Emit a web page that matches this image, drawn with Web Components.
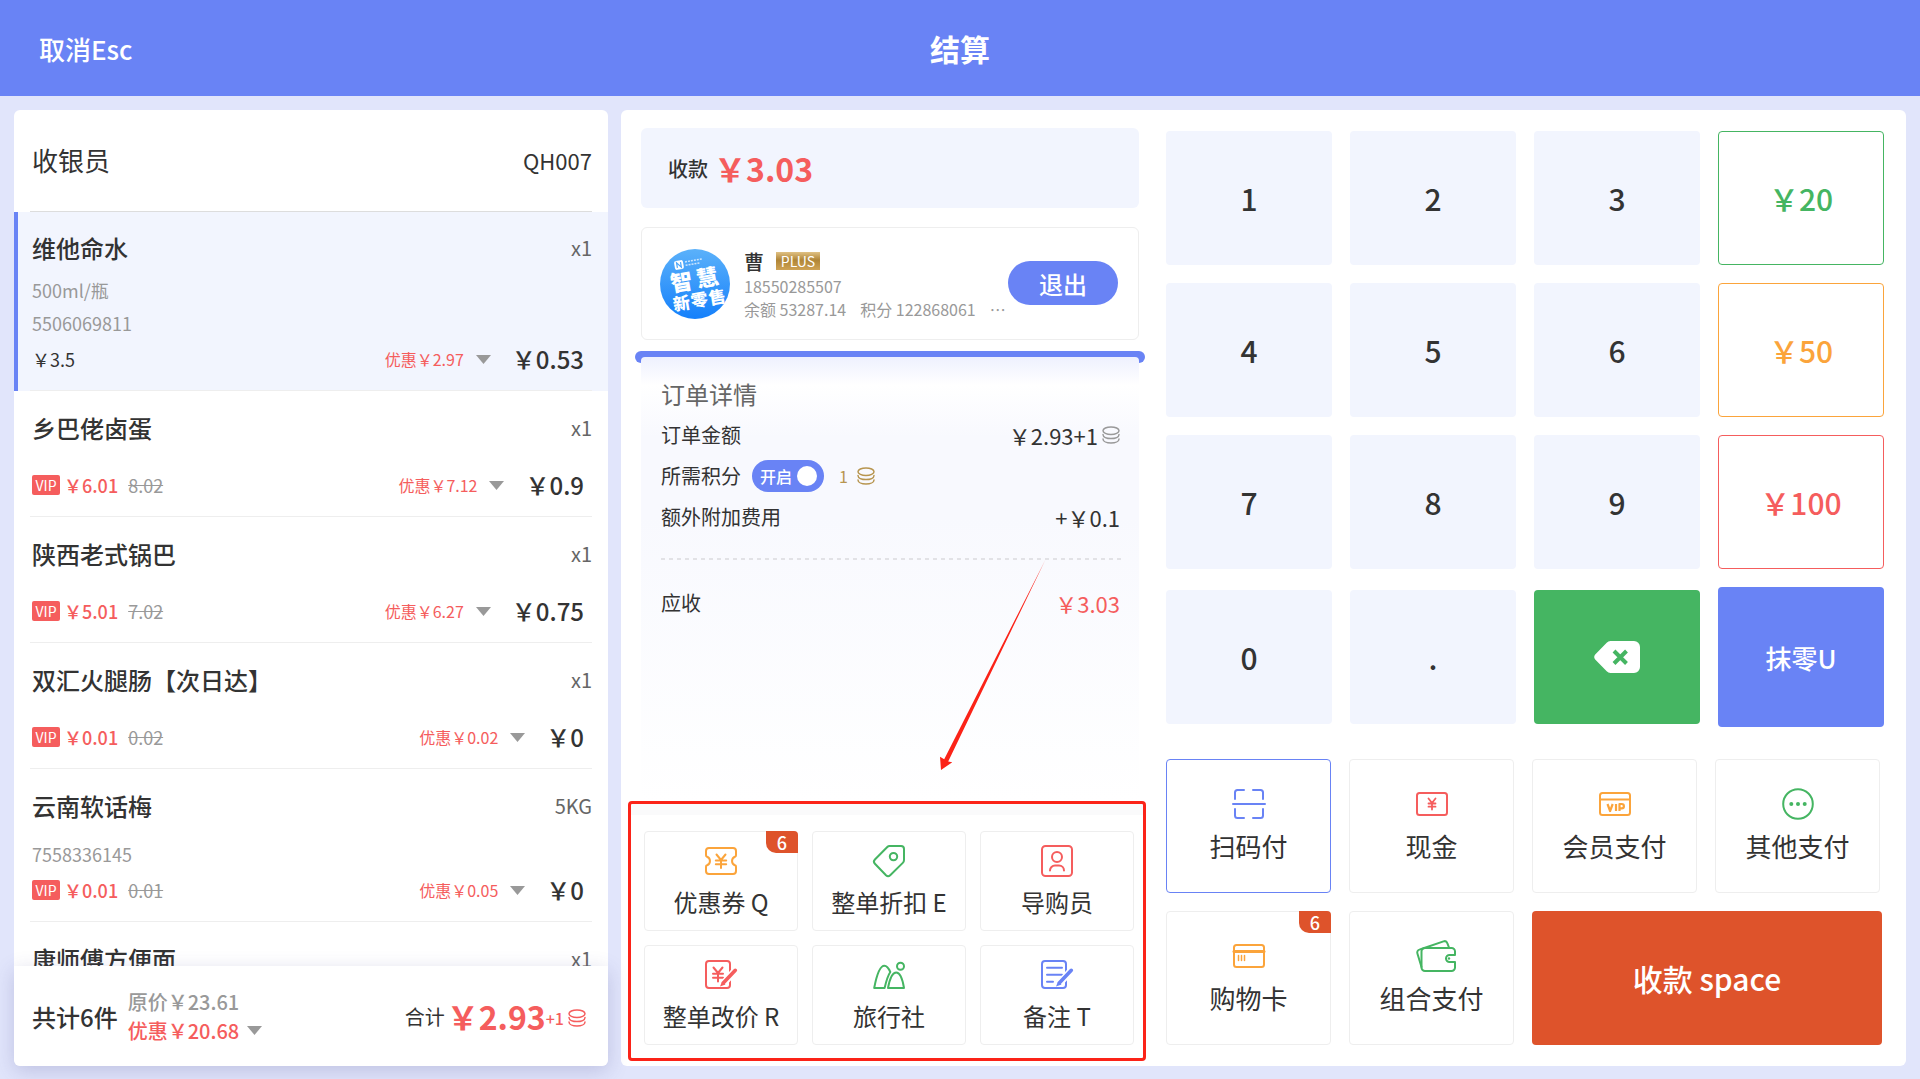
<!DOCTYPE html>
<html lang="zh-CN">
<head>
<meta charset="utf-8">
<title>结算</title>
<style>
  :root {
    --primary: #6983f5;
    --red: #f55d5d;
    --green: #45b562;
    --orange: #fba43b;
    --accent: #de532b;
    --tint: #f2f5fe;
    --ink: #333;
    --muted: #999;
    --line: #eee;
  }
  body {
    margin: 0;
    font-family: "Noto Sans CJK SC", "Noto Sans", sans-serif;
    color: var(--ink);
    background: #e1e5fb;
  }
</style>
</head>
<body>
<checkout-app></checkout-app>

<script>
const BASE = `
  *, *::before, *::after { box-sizing: border-box; }
  button { font: inherit; color: inherit; border: 0; background: none; padding: 0; margin: 0; cursor: pointer; }
  h1, h2 { margin: 0; padding: 0; }
`;

function define(name, css, html) {
  customElements.define(name, class extends HTMLElement {
    constructor() {
      super();
      this.attachShadow({ mode: 'open' });
    }
    connectedCallback() {
      const body = typeof html === 'function' ? html(this) : html;
      this.shadowRoot.innerHTML = `<style>${BASE}${css}</style>${body}`;
    }
  });
}

/* name: [width, height, markup] */
const ICONS = {
  coins: [18, 18, `<g stroke-width="1.5"><ellipse cx="9" cy="4.700" rx="8" ry="3.800"/><path d="M1 8.600c0 2.400 3.600 4 8 4s8-1.600 8-4M1 13c0 2.400 3.600 4 8 4s8-1.600 8-4"/></g>`],
  caret: [15, 9, `<path d="M0 0h15L7.5 9z" fill="currentColor" stroke="none"/>`],
  coupon: [32, 32, `<path d="M4 3h24a3 3 0 0 1 3 3v4.300c0 .7-.4 1.200-1 1.400a4.600 4.600 0 0 0 0 8.600c.6.2 1 .7 1 1.400V26a3 3 0 0 1-3 3H4a3 3 0 0 1-3-3v-4.300c0-.7.4-1.200 1-1.400a4.600 4.600 0 0 0 0-8.600c-.6-.2-1-.7-1-1.400V6a3 3 0 0 1 3-3z"/><path d="M11.500 9.500 16 15l4.500-5.500M16 15v8M10.800 15.500h10.400M10.800 19.300h10.400"/>`],
  tag: [32, 32, `<path d="M16.600 1H28a3 3 0 0 1 3 3v11a4 4 0 0 1-1.200 2.900L17.200 30.200a3 3 0 0 1-4.200 0L1.900 18.700a3 3 0 0 1 0-4.200L14.300 2a3.500 3.500 0 0 1 2.300-1z"/><circle cx="20.500" cy="11.600" r="3.700"/>`],
  person: [32, 32, `<rect x="1" y="1" width="30" height="30" rx="3.500"/><circle cx="16" cy="12" r="5"/><path d="M9 25.500a5 5 0 0 1 5-5h4a5 5 0 0 1 5 5"/>`],
  reprice: [32, 32, `<rect x="1" y="2" width="24" height="27" rx="3"/><path d="M8.500 8.500 13 14l4.500-5.500M13 14v8.500M8 14.800h10M8 18.800h10"/><path d="M30 11.500 19 24" stroke="#fff" stroke-width="7"/><path d="M30.300 11.300 18.500 23.800" stroke-width="3.600"/><path d="M15 27.500l2-5 3.500 3z" fill="currentColor" stroke="none"/>`],
  hills: [32, 32, `<path d="M1.200 29C3.500 17 7 6.800 11.400 6.800c2.600 0 4.400 2.800 5.900 6.200C14.600 17 13 23 11.600 29z"/><path d="M15 29c1.600-8.500 4.500-15.500 8.200-15.500S29.600 20.500 31 29z"/><circle cx="27.500" cy="7.200" r="3.500"/>`],
  note: [32, 32, `<rect x="1" y="2" width="24" height="27" rx="3"/><path d="M6 8.700h15M6 15.700h15M6 22.700h6"/><path d="M30 11.500 19 24" stroke="#fff" stroke-width="7"/><path d="M30.300 11.300 18.500 23.800" stroke-width="3.600"/><path d="M15 27.500l2-5 3.500 3z" fill="currentColor" stroke="none"/>`],
  scan: [32, 32, `<path d="M2 11V4.500A2.500 2.500 0 0 1 4.500 2H11M20 2h7.500A2.500 2.500 0 0 1 30 4.500V11M30 21v6.500a2.500 2.500 0 0 1-2.500 2.500H20M11 30H4.500A2.500 2.500 0 0 1 2 27.500V21M0 16h32"/>`],
  cash: [32, 32, `<rect x="1" y="5" width="30" height="22" rx="2.500"/><path d="M12.500 10.500 16 15l3.500-4.500M16 15v6.500M12.500 15.500h7M12.500 18.700h7" stroke-width="1.800"/>`],
  vip: [32, 32, `<rect x="1" y="5" width="30" height="22" rx="2.500"/><path d="M1 11.500h30"/><path d="M8.500 16l2.600 7 2.600-7M17 16v7M20.500 23v-7h2.200a2.100 2.100 0 0 1 0 4.400h-2.200" stroke-width="2.200" stroke-linecap="butt"/>`],
  more: [32, 32, `<circle cx="16" cy="16" r="14.800"/><g fill="currentColor" stroke="none"><circle cx="9.300" cy="16" r="2"/><circle cx="16" cy="16" r="2"/><circle cx="22.700" cy="16" r="2"/></g>`],
  card: [32, 32, `<rect x="1" y="5" width="30" height="22" rx="2.500"/><path d="M1 11.500h30" stroke-width="3"/><path d="M5.500 15.500v5M8.500 15.500v5M11.500 15.500v5" stroke-width="1.500"/>`],
  wallet: [40, 32, `<path d="M9 8h26.500A3.500 3.500 0 0 1 39 11.500V15h-5.500a3.500 3.500 0 0 0 0 7H39v5.500a3.500 3.500 0 0 1-3.500 3.500H9a3.500 3.500 0 0 1-3.500-3.500v-16A3.500 3.500 0 0 1 9 8z"/><path d="M7.500 8.200 27.500 1.400a3 3 0 0 1 3.800 1.800L33 7.500M5.500 27 1.400 13.500a3 3 0 0 1 2-3.900l4-1.400"/><circle cx="33" cy="18.500" r="1.200" fill="currentColor" stroke="none"/>`],
  erase: [46, 32, `<path d="M16.500 0H40a6 6 0 0 1 6 6v20a6 6 0 0 1-6 6H16.500a5 5 0 0 1-3.800-1.800L1.200 18.500a4 4 0 0 1 0-5L12.700 1.800A5 5 0 0 1 16.500 0z" fill="#fff" stroke="none"/><path d="M20 10l12.500 12.500M32.500 10 20 22.500" stroke="var(--green)" stroke-width="4" stroke-linecap="butt"/>`],
};

define('pos-icon',
  `:host { display: block; flex: none; } :host([name=wallet]) { width: 32px; } svg { display: block; overflow: visible; }`,
  el => {
    const [w, h, body] = ICONS[el.getAttribute('name')];
    return `<svg width="${w}" height="${h}" viewBox="0 0 ${w} ${h}" fill="none" stroke="currentColor" stroke-width="2" stroke-linecap="round" stroke-linejoin="round" aria-hidden="true">${body}</svg>`;
  });

define('top-bar', `
  :host { display: grid; grid-template-columns: 1fr auto 1fr; align-items: center; flex: none; height: 96px; padding: 0 39px; background: var(--primary); color: #fff; }
  button { justify-self: start; font-size: 26px; font-weight: 500; }
  h1 { font-size: 30px; font-weight: 700; }`,
  `<button type="button">取消Esc</button><h1>结算</h1>`);

define('cart-item', `
  :host { display: flex; flex-direction: column; flex: none; padding: 19px 16px 0 18px; }
  :host([selected]) { padding-top: 18px; background: var(--tint); box-shadow: inset 4px 0 var(--primary); }
  .head { display: flex; justify-content: space-between; line-height: 36px; }
  .name { font-size: 24px; font-weight: 500; }
  .qty { font-size: 20px; color: #666; }
  .meta { margin-top: 14px; font-size: 18px; line-height: 33px; color: var(--muted); }
  :host([selected]) .meta { margin-top: 8px; }
  .row { display: flex; align-items: center; line-height: 36px; margin-top: 21px; font-size: 18px; padding-right: 8px; }
  .meta + .row { margin-top: 1px; }
  .vip { width: 28px; line-height: 20px; margin-right: 4px; border-radius: 2px; background: var(--red); color: #fff; font-size: 14px; text-align: center; }
  .now { color: var(--red); font-weight: 500; }
  s { margin-left: 10px; color: var(--muted); }
  .off { display: flex; align-items: center; gap: 12px; margin-left: auto; font-size: 16px; line-height: 36px; color: var(--red); }
  .off pos-icon { color: var(--muted); }
  .sum { margin-left: 21px; font-size: 24px; font-weight: 500; }
  .rule { height: 1px; margin: 13px 0 0 -2px; background: var(--line); }`,
  el => {
    const a = n => el.getAttribute(n) || '';
    const meta = a('meta') ? `<div class="meta">${a('meta').split('|').map(t => `<div>${t}</div>`).join('')}</div>` : '';
    const price = a('was')
      ? `<span class="vip">VIP</span><span class="now">${a('price')}</span><s>${a('was')}</s>`
      : `<span>${a('price')}</span>`;
    return `
      <div class="head"><span class="name"><slot></slot></span><span class="qty">${a('qty')}</span></div>
      ${meta}
      ${a('sum') ? `<div class="row">${price}<button class="off" type="button">优惠${a('off')}<pos-icon name="caret"></pos-icon></button><span class="sum">${a('sum')}</span></div><div class="rule"></div>` : ''}`;
  });

define('cart-panel', `
  :host { display: flex; flex-direction: column; min-height: 0; border-radius: 6px; background: #fff; }
  .cashier { display: flex; align-items: center; justify-content: space-between; flex: none; height: 102px; margin: 0 16px; padding: 0 0 2px 2px; border-bottom: 1px solid #ddd; font-size: 26px; }
  .cashier span + span { font-size: 22px; }
  .list { flex: 1; min-height: 0; overflow: hidden; display: flex; flex-direction: column; }
  .total { position: relative; display: flex; align-items: center; flex: none; height: 100px; padding: 0 22px 0 18px; border-radius: 0 0 6px 6px; background: #fff; box-shadow: 0 5px 20px rgba(70, 70, 140, .22); }
  .count { font-size: 24px; font-weight: 500; }
  .prices { margin-left: 10px; font-size: 20px; font-weight: 500; line-height: 29px; color: var(--muted); }
  .saved { display: flex; align-items: center; gap: 8px; color: var(--red); line-height: 29px; }
  .saved pos-icon { color: var(--muted); }
  .due { display: flex; align-items: center; margin-left: auto; font-size: 20px; color: var(--red); }
  .due span { color: var(--ink); margin-right: 2px; }
  .due strong { font-size: 32px; font-weight: 700; }
  .due em { font-style: normal; font-size: 16px; font-weight: 500; padding-top: 4px; }
  .due pos-icon { margin-left: 4px; padding-top: 4px; }`, `
  <div class="cashier"><span>收银员</span><span>QH007</span></div>
  <div class="list">
    <cart-item selected qty="x1" meta="500ml/瓶|5506069811" price="￥3.5" off="￥2.97" sum="￥0.53">维他命水</cart-item>
    <cart-item qty="x1" price="￥6.01" was="8.02" off="￥7.12" sum="￥0.9">乡巴佬卤蛋</cart-item>
    <cart-item qty="x1" price="￥5.01" was="7.02" off="￥6.27" sum="￥0.75">陕西老式锅巴</cart-item>
    <cart-item qty="x1" price="￥0.01" was="0.02" off="￥0.02" sum="￥0">双汇火腿肠【次日达】</cart-item>
    <cart-item qty="5KG" meta="7558336145" price="￥0.01" was="0.01" off="￥0.05" sum="￥0">云南软话梅</cart-item>
    <cart-item qty="x1">康师傅方便面</cart-item>
  </div>
  <div class="total">
    <span class="count">共计6件</span>
    <div class="prices"><div>原价￥23.61</div><button class="saved" type="button">优惠￥20.68<pos-icon name="caret"></pos-icon></button></div>
    <div class="due"><span>合计</span><strong>￥2.93</strong><em>+1</em><pos-icon name="coins"></pos-icon></div>
  </div>`);

define('member-card', `
  :host { display: flex; align-items: center; height: 113px; padding: 0 20px 0 18px; border: 1px solid var(--line); border-radius: 6px; }
  .avatar { flex: none; display: block; }
  .info { margin-left: 14px; padding-top: 2px; font-size: 16px; line-height: 23px; color: var(--muted); white-space: nowrap; }
  .who { display: flex; align-items: center; gap: 12px; line-height: 26px; font-size: 20px; font-weight: 500; color: var(--ink); }
  .plus { width: 44px; line-height: 18px; margin-bottom: 2px; text-align: center; font-size: 14px; font-weight: 400; color: #fff; background: linear-gradient(#e0c184, #b08536 45%, #cfa355); }
  .sums { display: flex; gap: 14px; }
  .quit { flex: none; margin: 0 0 1px auto; width: 110px; height: 44px; border-radius: 22px; background: var(--primary); color: #fff; font-size: 24px; font-weight: 500; }`, `
  <svg class="avatar" width="70" height="70" viewBox="0 0 70 70" role="img" aria-label="智慧新零售">
    <defs><linearGradient id="g" x1="0" y1="0" x2="0" y2="1"><stop offset="0" stop-color="#5bb1fa"/><stop offset="1" stop-color="#1580fb"/></linearGradient></defs>
    <circle cx="35" cy="35" r="35" fill="url(#g)"/>
    <g transform="rotate(-10 35 35)" fill="#fff" font-family="Noto Sans CJK SC, sans-serif" font-weight="900">
      <rect x="18" y="9" width="9" height="9" rx="2"/><path d="M20.500 16v-5l4 5v-5" stroke="#4aa5fa" stroke-width="1.200" fill="none"/>
      <path d="M29 11.500h17M29 15h15" stroke="#fff" stroke-width="1.500" stroke-dasharray="2 1" opacity=".7"/>
      <text x="11" y="39" font-size="22">智</text><text x="37" y="39" font-size="22">慧</text>
      <text x="10" y="58" font-size="17">新</text><text x="28" y="58" font-size="17">零</text><text x="46" y="58" font-size="17">售</text>
    </g>
  </svg>
  <div class="info">
    <div class="who">曹<span class="plus">PLUS</span></div>
    <div>18550285507</div>
    <div class="sums"><span>余额 53287.14</span><span>积分 122868061</span><span>…</span></div>
  </div>
  <button class="quit" type="button">退出</button>`);

define('order-detail', `
  :host { display: flex; flex-direction: column; flex: 1; min-height: 0; }
  .bar { flex: none; height: 12px; margin: 0 -6px -6px; border-radius: 6px; background: var(--primary); }
  .sheet { position: relative; flex: 1; min-height: 0; padding: 19px 18px 0 20px; border-radius: 4px 4px 0 0;
    background: linear-gradient(#eef1fe 0, #fff 28px, #f8f9fe 80px, #f8f9fe 160px, #fff 100%); }
  h2 { font-size: 24px; font-weight: 400; line-height: 36px; color: #666; }
  .row { display: flex; align-items: center; height: 41px; font-size: 20px; }
  .row:first-of-type { margin-top: 2px; }
  .amt { display: flex; align-items: center; gap: 4px; margin: 0 1px 0 auto; font-size: 22px; }
  .amt pos-icon { color: var(--muted); }
  .due { color: var(--red); }
  .switch { position: relative; display: flex; align-items: center; width: 72px; height: 32px; margin-left: 11px; padding-left: 8px; border-radius: 16px; background: var(--primary); color: #fff; font-size: 16px; font-weight: 500; }
  .switch input { position: absolute; inset: 0; margin: 0; opacity: 0; }
  .switch i { width: 20px; height: 20px; margin-left: 5px; border-radius: 50%; background: #fff; }
  .pts { display: flex; align-items: center; gap: 9px; margin-left: 15px; font-size: 16px; color: #b7954f; }
  .dash { height: 2px; margin: 21px 0 22px; background: repeating-linear-gradient(90deg, #e2e2e6 0 4px, transparent 4px 8px); }
  .arrow { position: absolute; right: 88px; top: 200px; width: 112px; height: 216px; }`, `
  <div class="bar"></div>
  <div class="sheet">
    <h2>订单详情</h2>
    <div class="row"><span>订单金额</span><span class="amt">￥2.93+1<pos-icon name="coins"></pos-icon></span></div>
    <div class="row"><span>所需积分</span><label class="switch"><input type="checkbox" role="switch" checked>开启<i></i></label><span class="pts">1<pos-icon name="coins"></pos-icon></span></div>
    <div class="row"><span>额外附加费用</span><span class="amt">+￥0.1</span></div>
    <div class="dash"></div>
    <div class="row"><span>应收</span><span class="amt due">￥3.03</span></div>
    <svg class="arrow" viewBox="0 0 112 216" aria-hidden="true"><path d="M106.300 3 9.200 204.400l4.100.9L2 213 1 199.700l4.200 2.600z" fill="#fb2318"/></svg>
  </div>`);

define('action-tile', `
  :host { display: block; }
  button { position: relative; display: flex; flex-direction: column; align-items: center; width: 100%; height: 100px; padding-top: 13px; border: 1px solid var(--line); border-radius: 4px; background: #fff; font-size: 24px; line-height: 36px; }
  pos-icon { margin-bottom: 7px; color: var(--icon); }
  :host([size=large]) button { height: 134px; padding-top: 28px; font-size: 26px; line-height: 40px; }
  :host([size=large]) pos-icon { margin-bottom: 6px; }
  :host([active]) button { border-color: var(--primary); }
  .badge { position: absolute; top: -1px; right: -1px; width: 32px; line-height: 22px; border-radius: 0 4px 0 10px; background: var(--accent); color: #fff; font-size: 18px; font-weight: 500; text-align: center; }`,
  el => `<button type="button"><pos-icon name="${el.getAttribute('icon')}" style="--icon: var(--${el.getAttribute('tone')})"></pos-icon><span><slot></slot></span>${el.hasAttribute('badge') ? `<span class="badge">${el.getAttribute('badge')}</span>` : ''}</button>`);

/* Red callout frame around the order actions */
define('callout-frame', `
  :host { display: block; flex: none; margin: 0 -7px 0 -13px; padding: 27px 9px 13px 13px; border: 3px solid #fb2318; border-radius: 4px; background: linear-gradient(#fafafb 0 11px, #fff 11px); }
  .grid { display: grid; grid-template-columns: repeat(3, minmax(0, 1fr)); gap: 14px; }`,
  `<div class="grid"><slot></slot></div>`);

define('key-button', `
  :host { display: block; }
  button { display: flex; align-items: center; justify-content: center; width: 100%; height: 134px; border-radius: 4px; background: var(--tint); font-size: 30px; font-weight: 500; }
  :host([outline]) button { border: 1px solid var(--tone); background: #fff; color: var(--tone); }
  :host([solid]) button { background: var(--tone); color: #fff; }
  :host([tall]) button { height: 140px; font-size: 26px; }`,
  el => `<button type="button" style="--tone: var(--${el.getAttribute('tone') || 'tint'})" ${el.getAttribute('label') ? `aria-label="${el.getAttribute('label')}"` : ''}><slot></slot></button>`);

define('pay-pad', `
  :host { display: block; }
  .keys { display: grid; grid-template-columns: repeat(4, minmax(0, 1fr)); gap: 18px; align-items: center; }
  .pays { display: grid; grid-template-columns: repeat(4, minmax(0, 1fr)); gap: 18px; margin: 32px 4px 0 0; }
  .submit { grid-column: span 2; height: 134px; margin-right: -2px; border-radius: 4px; background: var(--accent); color: #fff; font-size: 30px; font-weight: 500; }`, `
  <div class="keys">
    <key-button>1</key-button><key-button>2</key-button><key-button>3</key-button><key-button outline tone="green">￥20</key-button>
    <key-button>4</key-button><key-button>5</key-button><key-button>6</key-button><key-button outline tone="orange">￥50</key-button>
    <key-button>7</key-button><key-button>8</key-button><key-button>9</key-button><key-button outline tone="red">￥100</key-button>
    <key-button>0</key-button><key-button>.</key-button><key-button solid tone="green" label="删除"><pos-icon name="erase"></pos-icon></key-button><key-button solid tall tone="primary">抹零U</key-button>
  </div>
  <div class="pays">
    <action-tile size="large" active icon="scan" tone="primary">扫码付</action-tile>
    <action-tile size="large" icon="cash" tone="red">现金</action-tile>
    <action-tile size="large" icon="vip" tone="orange">会员支付</action-tile>
    <action-tile size="large" icon="more" tone="green">其他支付</action-tile>
    <action-tile size="large" icon="card" tone="orange" badge="6">购物卡</action-tile>
    <action-tile size="large" icon="wallet" tone="green">组合支付</action-tile>
    <button class="submit" type="button">收款 space</button>
  </div>`);

define('checkout-app', `
  :host { display: flex; flex-direction: column; height: 100vh; min-height: 1079px; }
  main { flex: 1; min-height: 0; display: grid; grid-template-columns: minmax(0, 594fr) minmax(0, 1285fr); gap: 13px; padding: 14px 14px 13px; }
  .work { display: grid; grid-template-columns: minmax(0, 498fr) minmax(0, 718fr); gap: 27px; min-height: 0; padding: 0 22px 0 20px; border-radius: 6px; background: #fff; }
  .order { display: flex; flex-direction: column; min-height: 0; padding: 18px 0 5px; }
  .receive { display: flex; align-items: center; gap: 6px; flex: none; height: 80px; padding-left: 27px; border-radius: 6px; background: var(--tint); font-size: 20px; font-weight: 500; }
  .receive strong { font-size: 32px; font-weight: 700; color: var(--red); }
  member-card { flex: none; margin: 19px 0 11px; }
  pay-pad { padding-top: 21px; }`, `
  <top-bar></top-bar>
  <main>
    <cart-panel></cart-panel>
    <section class="work">
      <div class="order">
        <div class="receive">收款<strong>￥3.03</strong></div>
        <member-card></member-card>
        <order-detail></order-detail>
        <callout-frame>
          <action-tile icon="coupon" tone="orange" badge="6">优惠券 Q</action-tile>
          <action-tile icon="tag" tone="green">整单折扣 E</action-tile>
          <action-tile icon="person" tone="red">导购员</action-tile>
          <action-tile icon="reprice" tone="red">整单改价 R</action-tile>
          <action-tile icon="hills" tone="green">旅行社</action-tile>
          <action-tile icon="note" tone="primary">备注 T</action-tile>
        </callout-frame>
      </div>
      <pay-pad></pay-pad>
    </section>
  </main>`);
</script>
</body>
</html>
